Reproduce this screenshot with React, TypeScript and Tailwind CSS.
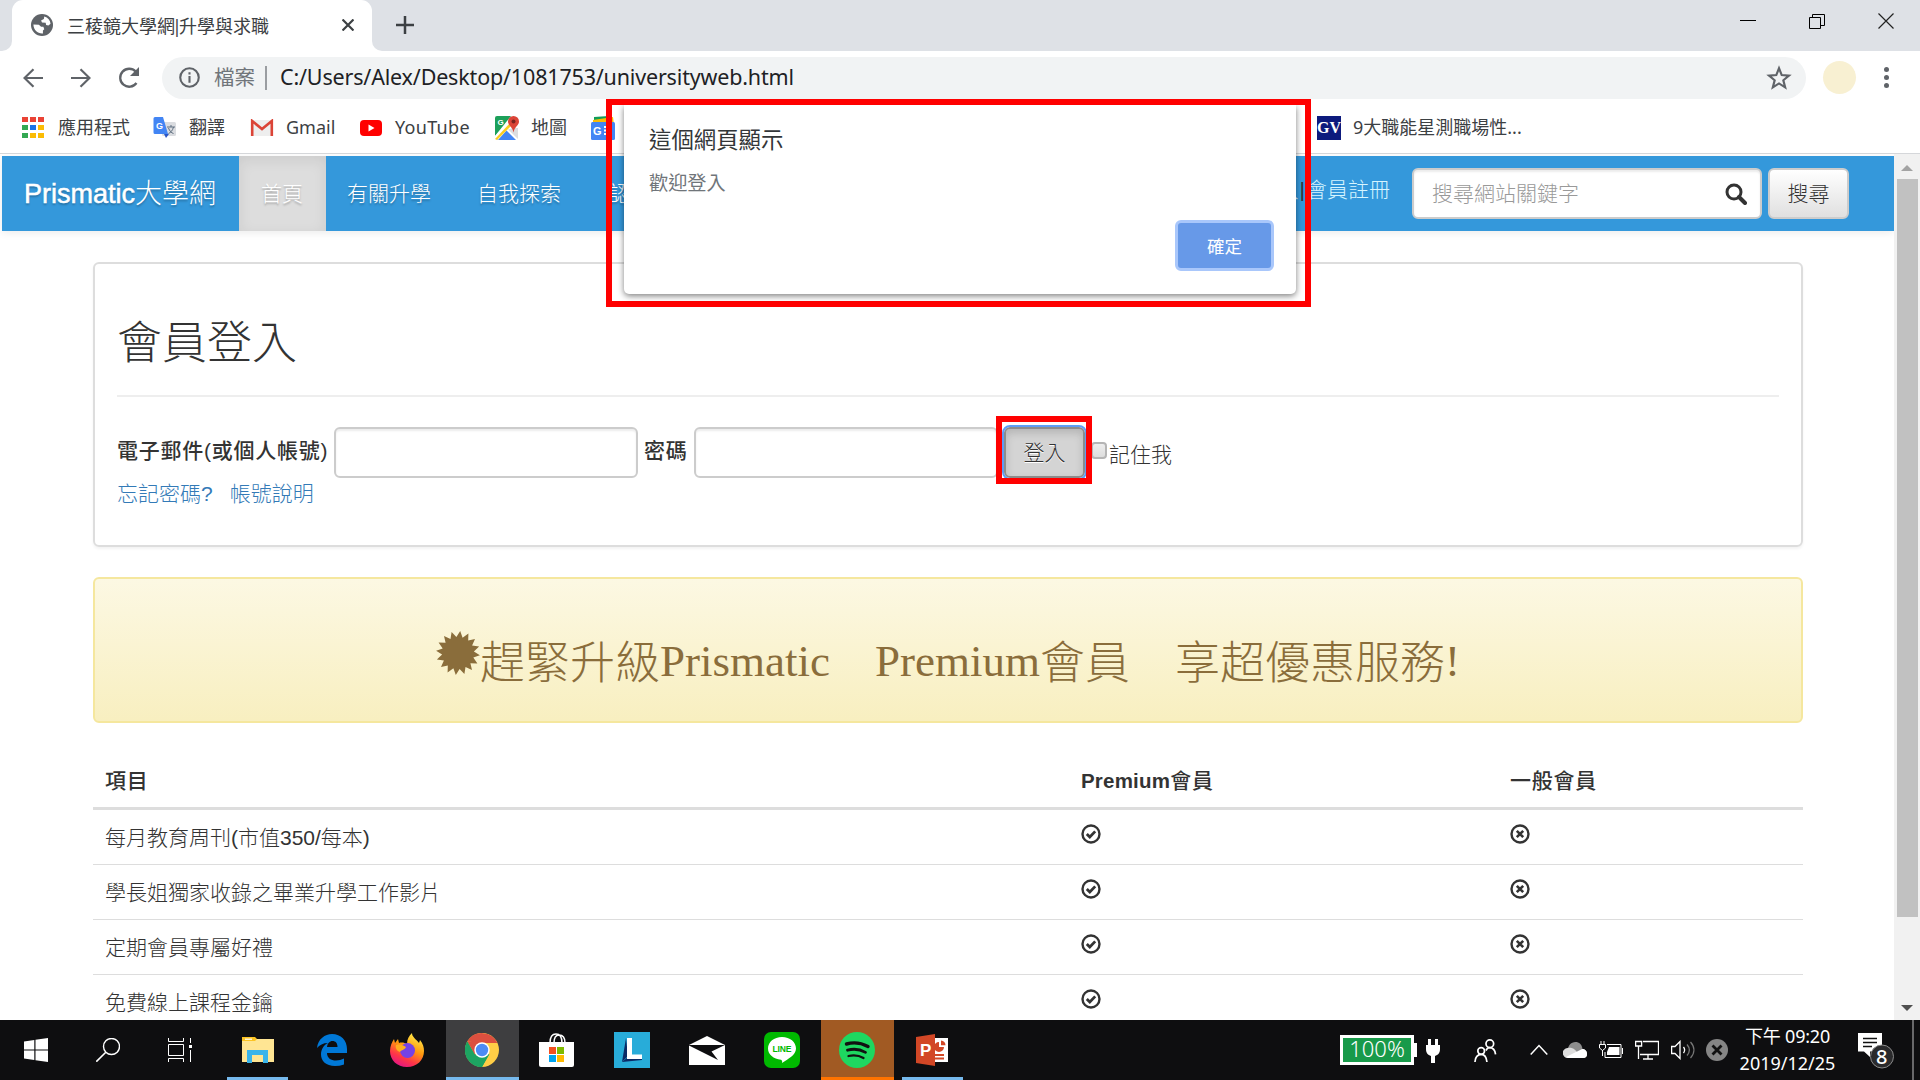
import React from "react";

const UI = "font-['Noto_Sans','Noto_Sans_CJK_TC',sans-serif]";
const ARIAL = "font-['Liberation_Sans','Noto_Sans_CJK_TC',sans-serif] font-light";
const TIMES = "font-['Liberation_Serif','Noto_Sans_CJK_TC',serif] font-light";

const Bookmark = ({ icon, label, cls }: { icon: React.ReactNode; label: string; cls: string }) => (
  <div className={`flex shrink-0 items-center gap-3 ${cls}`}>
    <span className="flex w-6 shrink-0 justify-center">{icon}</span>
    <span className="whitespace-nowrap">{label}</span>
  </div>
);

const AppsIcon = () => {
  const colors = ["#ea4335", "#ea4335", "#ea4335", "#34a853", "#1a73e8", "#fbbc04", "#34a853", "#fbbc04", "#fbbc04"];
  return (
    <span className="grid grid-cols-3 gap-x-[2px] gap-y-[3px]">
      {colors.map((c, i) => (
        <span key={i} className="h-[5px] w-[6px]" style={{ background: c }} />
      ))}
    </span>
  );
};

const TranslateIcon = () => (
  <svg viewBox="0 0 24 24" className="size-6">
    <rect x="9" y="6" width="14" height="14" rx="1.5" fill="#dadce0" />
    <path d="M14 11h8M18 9v2M20.500 11c-1 4-3 5.500-5 6.500M15.500 12c1 3 3 5 5 5.500" stroke="#5f6f80" fill="none" />
    <path d="M11 18h5l-3 4z" fill="#2a56c6" />
    <path d="M2 1h8l5 17H2a1.500 1.500 0 0 1-1.500-1.500v-14A1.500 1.500 0 0 1 2 1z" fill="#4285f4" />
    <text x="3" y="12.500" fontSize="9" fontWeight="700" fill="#fff" fontFamily="Liberation Sans">G</text>
  </svg>
);

const GmailIcon = () => (
  <svg viewBox="0 0 24 18" className="h-[18px] w-6">
    <path d="M2 1h20v16H2z" fill="#eee" />
    <path d="M2.200 17V2l9.800 8 9.800-8v15" fill="none" stroke="#db4437" strokeWidth="2.600" />
  </svg>
);

const YoutubeIcon = () => (
  <svg viewBox="0 0 24 18" className="h-[18px] w-6">
    <rect x="1" y="1" width="22" height="16" rx="4" fill="#f00" />
    <path d="M9.500 5.500v7l6-3.500z" fill="#fff" />
  </svg>
);

const MapsIcon = () => (
  <svg viewBox="0 0 24 24" className="size-6">
    <rect width="24" height="24" rx="2" fill="#fff" />
    <path d="M2 0h14L0 20V2a2 2 0 0 1 2-2z" fill="#1da05a" />
    <path d="M2 24l9-10 10 10z" fill="#4285f4" />
    <path d="M0 20L16 3l2 4L3 24z" fill="#fff" />
    <path d="M0 23L15 7l2 2L2 24z" fill="#fbcd20" />
    <path d="M13 13.500l10 9.500V12l-5 0z" fill="#dcdde0" />
    <path d="M18.500 0a5.500 5.500 0 0 1 5.500 5.500c0 4-4.500 5-5.500 11-1-6-5.500-7-5.500-11A5.500 5.500 0 0 1 18.500 0z" fill="#db4437" />
    <circle cx="18.500" cy="5.500" r="2" fill="#7b231e" />
    <text x="2.500" y="8.500" fontSize="8" fontWeight="700" fill="#fff" fontFamily="Liberation Sans">G</text>
  </svg>
);

const NewsIcon = () => (
  <svg viewBox="0 0 24 24" className="size-6">
    <path d="M3 1l15-1v6H3z" fill="#0f9d58" />
    <path d="M2 4l20-3 1 8H2z" fill="#fbbc04" />
    <rect y="6" width="24" height="18" rx="1.500" fill="#4285f4" />
    <text x="2" y="18.500" fontSize="11" fontWeight="700" fill="#fff" fontFamily="Liberation Sans">G</text>
    <path d="M13 11h8M13 14.500h8M13 18h8" stroke="#fff" strokeWidth="2" />
  </svg>
);

const TabStrip = () => (
  <div className="flex h-[51px] items-start bg-[#dee1e6]">
    <div className="flex h-full w-3 items-end bg-white">
      <div className="h-full w-full rounded-br-[10px] bg-[#dee1e6]" />
    </div>
    <div className="flex h-full w-[360px] items-center rounded-t-[11px] bg-white pl-[19px] pr-[18px]">
      <svg viewBox="0 0 24 24" className="-mt-px size-[22px]">
        <circle cx="12" cy="12" r="12" fill="#5f6368" />
        <path d="M14.500 2.800C18.500 4 21 7 21.300 10.500L19 12.500l-2.500-.5-.5-2.500-4-.3L11 7l3-1.500z" fill="#fff" />
        <path d="M2.600 11.500l6 .3 2.400 2 2.500.2 1 2.500-1.500 1.500v3.200C7 21.500 3 18 2.600 11.500z" fill="#fff" />
      </svg>
      <span className="ml-[14px] mt-px w-[230px] whitespace-nowrap text-[18px] text-[#3c4043]">三稜鏡大學網<span className="-mx-[3px]">|</span>升學與求職</span>
      <svg viewBox="0 0 12 12" className="-mt-px ml-auto size-3">
        <path d="M.5.5l11 11M11.500.5l-11 11" stroke="#3c4043" strokeWidth="2.200" />
      </svg>
    </div>
    <div className="h-full w-3 bg-white">
      <div className="h-full w-full rounded-bl-[10px] bg-[#dee1e6]" />
    </div>
    <svg viewBox="0 0 18 18" className="ml-3 mt-4 size-[18px]">
      <path d="M9 0v18M0 9h18" stroke="#3c4043" strokeWidth="2.500" />
    </svg>
    <div className="ml-auto mr-[26px] mt-[13px] flex gap-[53px]">
      <svg viewBox="0 0 16 16" className="size-4"><path d="M0 7.500h16" stroke="#000" /></svg>
      <svg viewBox="0 0 16 16" className="size-4">
        <path d="M.5 4.500h11v11H.5zM3.500 4V1.500h12v11H12" fill="none" stroke="#000" />
      </svg>
      <svg viewBox="0 0 16 16" className="size-4"><path d="M.5.5l15 15M15.500.5l-15 15" stroke="#222" strokeWidth="1.200" /></svg>
    </div>
  </div>
);

const Toolbar = () => (
  <div className="flex h-[51px] items-center pl-[23px] pt-[2px]">
    <svg viewBox="0 0 20 20" className="size-5"><path d="M20 10H2M10.500 1.200L1.500 10l9 8.800" fill="none" stroke="#5f6368" strokeWidth="2.200" /></svg>
    <svg viewBox="0 0 20 20" className="ml-7 size-5"><path d="M0 10h18M9.500 1.200l9 8.800-9 8.800" fill="none" stroke="#5f6368" strokeWidth="2.200" /></svg>
    <svg viewBox="0 0 22 22" className="ml-[27px] size-[22px]">
      <path d="M18.500 16a9 9 0 1 1-.8-11.500" fill="none" stroke="#5f6368" strokeWidth="2.300" />
      <path d="M21 0v9h-9z" fill="#5f6368" />
    </svg>
    <div className="ml-[22px] flex h-[42px] w-[1644px] items-center rounded-full bg-[#f1f3f4] pl-[17px] pr-[14px]">
      <svg viewBox="0 0 22 22" className="size-[21px]">
        <circle cx="11" cy="11" r="9.700" fill="none" stroke="#5f6368" strokeWidth="2.200" />
        <path d="M11 9.500v7M11 5.500v2.300" stroke="#5f6368" strokeWidth="2.200" />
      </svg>
      <span className="ml-[14px] text-[20.500px] text-[#70757a]">檔案</span>
      <span className="ml-[10px] h-6 w-[2px] bg-[#9a9da1]" />
      <span className="ml-[13px] whitespace-nowrap text-[21.500px] tracking-[-0.170px] text-[#202124]">C:/Users/Alex/Desktop/1081753/universityweb.html</span>
      <svg viewBox="0 0 24 24" className="ml-auto size-[26px]">
        <path d="M12 3l2.500 6.300 6.700.5-5.200 4.300 1.700 6.600L12 17l-5.700 3.700L8 14.100 2.800 9.800l6.700-.5z" fill="none" stroke="#5f6368" strokeWidth="2" />
      </svg>
    </div>
    <span className="ml-[17px] size-[33px] rounded-full bg-[#f8f0d2]" />
    <span className="ml-[28px] flex flex-col gap-[3px]">
      <i className="size-[5px] rounded-full bg-[#5f6368]" />
      <i className="size-[5px] rounded-full bg-[#5f6368]" />
      <i className="size-[5px] rounded-full bg-[#5f6368]" />
    </span>
  </div>
);

const Bookmarks = () => (
  <div className="flex h-[51px] items-center pl-[21px] text-[18px] text-[#3c4043]">
    <Bookmark cls="w-[132px] [&>span:last-child]:ml-px" icon={<AppsIcon />} label="應用程式" />
    <Bookmark cls="w-[97px]" icon={<TranslateIcon />} label="翻譯" />
    <Bookmark cls="w-[109px]" icon={<GmailIcon />} label="Gmail" />
    <Bookmark cls="w-[136px] [&>span:last-child]:tracking-[0.300px]" icon={<YoutubeIcon />} label="YouTube" />
    <Bookmark cls="w-[96px]" icon={<MapsIcon />} label="地圖" />
    <NewsIcon />
    <span className="ml-[702px] flex size-6 items-center justify-center bg-[#0d1a7d] font-['Liberation_Serif',serif] text-[16px] font-bold text-white">GV</span>
    <span className="ml-3 whitespace-nowrap">9大職能星測職場性...</span>
  </div>
);

const SearchGlyph = () => (
  <svg viewBox="0 0 22 22" className="size-[22px]">
    <circle cx="9" cy="9" r="7" fill="none" stroke="#333" strokeWidth="3" />
    <path d="M14 14l6 6" stroke="#333" strokeWidth="4" strokeLinecap="round" />
  </svg>
);

const NavBar = () => (
  <nav className={`ml-[2px] flex h-[75px] w-[1892px] bg-[#3498db] text-[21px] text-white shadow-[0_2px_8px_rgba(0,0,0,0.08)] ${ARIAL} [&_span]:[text-shadow:0_2px_2px_rgba(0,0,0,0.25)]`}>
    <span className="flex w-[237px] items-center whitespace-nowrap pl-[22px] text-[27px]"><span className="font-normal [-webkit-text-stroke:0.500px_white]">Prismatic</span>大學網</span>
    <span className="flex w-[87px] items-center justify-center bg-[#dddddd] pr-px shadow-[inset_0_4px_14px_rgba(0,0,0,0.08)]">首頁</span>
    <span className="flex w-[130px] items-center pl-[21px]">有關升學</span>
    <span className="flex w-[132px] items-center pl-[21px]">自我探索</span>
    <span className="flex items-center whitespace-nowrap pl-[21px]">認</span>
    <div className="ml-auto flex pr-[45px]">
      <div className="mt-[19px] text-[#d6f5ff]">登入<i className="mx-[1px] not-italic text-[#333]">|</i>會員註冊</div>
      <div className="ml-[22px] mt-3 flex h-[51px] w-[350px] items-center justify-between rounded-[6px] border-2 border-[#ccc] bg-white pl-[18px] pr-[13px] shadow-[inset_0_2px_2px_rgba(0,0,0,0.08)]">
        <p className="text-[#999]">搜尋網站關鍵字</p>
        <SearchGlyph />
      </div>
      <div className="ml-[6px] mt-3 flex h-[51px] w-[81px] items-center justify-center rounded-[6px] border-2 border-[#ccc] bg-gradient-to-b from-white to-[#e0e0e0] text-[#333]">搜尋</div>
    </div>
  </nav>
);

const Field = () => <div className="h-[51px] w-[304px] rounded-[6px] border-2 border-[#ccc] bg-white shadow-[inset_0_2px_2px_rgba(0,0,0,0.075)]" />;

const LoginPanel = () => (
  <section className="mt-[31px] h-[285px] rounded-[6px] border-2 border-[#ddd] px-[22px] shadow-[0_2px_3px_rgba(0,0,0,0.05)]">
    <h2 className={`mt-[50px] h-[60px] text-[45px] leading-[60px] ${TIMES}`}>會員登入</h2>
    <hr className="mt-[21px] border-t-2 border-[#eee]" />
    <div className="mt-[30px] flex items-center">
      <b className="mb-[3px] w-[217px] whitespace-nowrap font-medium tracking-[0.750px]">電子郵件(或個人帳號)</b>
      <Field />
      <b className="mb-[3px] ml-[6px] w-[50px] font-medium tracking-[0.750px]">密碼</b>
      <Field />
      <div className="relative ml-[6px] flex h-[51px] w-[81px] items-center justify-center rounded-[6px] border-2 border-[#8c8c8c] bg-[#d4d4d4] shadow-[inset_0_4px_8px_rgba(0,0,0,0.15)] outline-2 outline-[#5e9df5] [text-shadow:0_1px_0_#fff]">
        登入
        <div className="absolute -left-[10px] -top-[13px] h-[68px] w-[96px] border-6 border-[#f00]" />
      </div>
      <div className="mb-[5px] ml-[6px] h-[17px] w-4 rounded-[4px] border-2 border-[#b5b5b5] bg-gradient-to-b from-[#eee] to-[#ddd]" />
      <span className="ml-[2px] mt-1">記住我</span>
    </div>
    <div className="flex h-8 items-center gap-[17px] text-[#337ab7]">
      <span>忘記密碼?</span>
      <span>帳號說明</span>
    </div>
  </section>
);

const Burst = () => {
  const pts = Array.from({ length: 32 }, (_, i) => {
    const a = ((i + 0.5) * Math.PI) / 16;
    const r = i % 2 ? 16 : 22;
    return `${(22 + r * Math.sin(a)).toFixed(1)},${(22 - r * Math.cos(a)).toFixed(1)}`;
  }).join(" ");
  return <svg viewBox="0 0 44 44" className="-mt-4 size-11"><polygon points={pts} fill="#8a6d3b" /></svg>;
};

const Banner = () => (
  <section className={`mt-[30px] flex h-[146px] items-center justify-center rounded-[6px] border-2 border-[#f5e79e] bg-gradient-to-b from-[#fcf8e3] to-[#f8efc0] pt-[22px] text-[45px] leading-[30px] text-[#8a6d3b] ${TIMES}`}>
    <Burst />
    <span className="flex items-center whitespace-pre">
      <span className="pt-[5px]">趕緊升級</span>
      <span className="font-normal">Prismatic　Premium</span>
      <span className="pt-[5px]">會員　享超優惠服務</span>
      <span>!</span>
    </span>
  </section>
);

const Mark = ({ ok }: { ok: boolean }) => (
  <svg viewBox="0 0 20 20" className="ml-[-0.500px] mt-[-6px] size-5">
    <circle cx="10" cy="10" r="8.500" fill="none" stroke="#333" strokeWidth="2.400" />
    {ok ? <path d="M5.800 10l3 3 5.400-5.600" fill="none" stroke="#333" strokeWidth="2.800" /> : <path d="M6.800 6.800l6.400 6.400M13.200 6.800l-6.400 6.400" stroke="#333" strokeWidth="2.600" />}
  </svg>
);

const rows = ["每月教育周刊(市值350/每本)", "學長姐獨家收錄之畢業升學工作影片", "定期會員專屬好禮", "免費線上課程金鑰"];

const Plans = () => (
  <section className="mt-[30px]">
    <div className="grid h-[57px] grid-cols-[976px_429px_1fr] items-center border-b-[3px] border-[#ddd] pl-3 pt-[2px] font-medium tracking-[0.750px]">
      <span>項目</span>
      <span><b className="text-[20.500px] tracking-[0.200px]">Premium</b>會員</span>
      <span>一般會員</span>
    </div>
    {rows.map((r) => (
      <div key={r} className="grid h-[55px] grid-cols-[976px_429px_1fr] items-center border-b border-[#ddd] pl-3">
        <span className="pt-px">{r}</span>
        <Mark ok />
        <Mark ok={false} />
      </div>
    ))}
  </section>
);

const Dialog = () => (
  <div className="absolute left-[606px] top-[99px] h-[208px] w-[705px] border-6 border-[#f00]">
    <div className="ml-3 h-[189px] w-[672px] rounded-b-[5px] bg-white px-[25px] shadow-[0_2px_6px_rgba(0,0,0,0.5)] [clip-path:inset(0_-12px_-12px_-12px)]">
      <div className="pt-[19px] text-[22.400px] leading-8 text-[#333639]">這個網頁顯示</div>
      <div className="mt-[11px] text-[19.200px] leading-8 text-[#70757a]">歡迎登入</div>
      <div className="-mr-[3px] ml-auto mt-[21px] flex h-[51px] w-[99px] items-center justify-center rounded-[6px] border-[3px] border-[#a9c7fb] bg-[#6799e8] pt-px text-[17.500px] text-white">確定</div>
    </div>
  </div>
);

const Tile = ({ cls, children }: { cls: string; children: React.ReactNode }) => (
  <div className={`flex h-[60px] shrink-0 items-center justify-center ${cls}`}>{children}</div>
);

const Taskbar = () => (
  <footer className="flex h-[60px] items-center bg-[#0e0e10] text-white">
    <Tile cls="w-[72px]"><svg viewBox="0 0 24 24" className="size-6"><path d="M0 3.500L10.300 2v9.500H0zM11.500 1.800L24 0v11.500H11.500zM0 12.500h10.300V22L0 20.500zM11.500 12.500H24V24l-12.500-1.800z" fill="#fff" /></svg></Tile>
    <Tile cls="w-[72px]"><svg viewBox="0 0 24 24" className="size-6"><circle cx="15.500" cy="8.500" r="8" fill="none" stroke="#fff" strokeWidth="1.400" /><path d="M9.800 14.200L.3 23.700" stroke="#fff" strokeWidth="1.600" /></svg></Tile>
    <Tile cls="w-[72px]"><svg viewBox="0 0 24 24" className="size-6" fill="none" stroke="#fff"><path d="M.5 0v3.500h15V0M.5 6.500h15v11H.5zM.5 24v-3.500h15V24M22.500 0v5M22.500 12v12" /><path d="M21 7h3v3h-3z" fill="#fff" stroke="none" /></svg></Tile>
    <Tile cls="ml-[11px] w-[61px] border-b-[3px] border-[#76b9ed]"><svg viewBox="0 0 32 27" className="mt-[3px] h-[27px] w-8"><path d="M0 0h13l2 2v5H0z" fill="#fcc424" /><path d="M0 4h13l2-2h17v23H0z" fill="#ffe593" /><path d="M3 2.200h7" stroke="#fff" strokeWidth="1.200" /><path d="M5 26V13h21v13h-5v-8H10v8z" fill="#3ab4ea" /></svg></Tile>
    <Tile cls="w-[88px]"><svg viewBox="0 0 30 32" className="h-8 w-[30px]"><path d="M0 14C1 5 8 0 15 0c9 0 15 6.500 15 15v4H10c0 5 4 7.500 9 7.500 3 0 5.500-.8 8-2v6c-3 1-6 1.500-9 1.500C9 32 4 27 4 20.500 4 15 7 11 11 9 6 9 2.500 11 0 14zm10-1h10.500c0-4-2-6-5-6s-5 2.500-5.500 6z" fill="#0078d7" /></svg></Tile>
    <Tile cls="w-[70px] pr-2"><svg viewBox="0 0 34 34" className="size-[34px]"><defs><linearGradient id="fx" x1=".8" y1="0" x2=".3" y2="1"><stop offset="0" stopColor="#fff44f" /><stop offset=".45" stopColor="#ff980e" /><stop offset=".75" stopColor="#ff3647" /><stop offset="1" stopColor="#e31587" /></linearGradient></defs><path d="M17 34C7 34 0 27 0 18c0-5 2-9 4-12l1 4 3-4 1 4c3-1 6 0 8 1 0-5 2-8 5-11 0 4 4 6 7 10l1-3c3 4 4 7 4 11 0 9-7 16-17 16z" fill="url(#fx)" /><circle cx="17.500" cy="17.500" r="7.500" fill="#7542e5" /><path d="M6 12c4-1 7 0 10 2-1 3-5 3-6 5-3-1-5-4-4-7z" fill="#ffad1f" /></svg></Tile>
    <Tile cls="w-[73px] border-b-[3px] border-[#76b9ed] bg-[#3e3e40] pr-[2px]"><svg viewBox="0 0 34 34" className="mt-[3px] size-[34px]"><circle cx="17" cy="17" r="17" fill="#ffcd46" /><path d="M17 10L2.300 8.500A17 17 0 0 1 32.400 10z" fill="#db4f3f" /><path d="M2.300 8.500A17 17 0 0 0 17 34l7.400-12.800H9.600z" fill="#1da462" /><path d="M2.300 8.500l7.300 12.700L17 9z" fill="#db4f3f" /><path d="M2.300 8.500A17 17 0 0 0 17 34l6.500-12H10z" fill="#1da462" /><circle cx="17" cy="17" r="7.700" fill="#fff" /><circle cx="17" cy="17" r="6.200" fill="#4c8bf5" /></svg></Tile>
    <Tile cls="w-[75px]"><svg viewBox="0 0 35 34" className="h-[34px] w-[35px]"><path d="M11 10C11 3 14 1 17 1s6 2 6 9M15 10c0-6 2-8 5-8s6 2 6 8" fill="none" stroke="#fff" strokeWidth="1.500" /><path d="M0 9h35v23a2 2 0 0 1-2 2H2a2 2 0 0 1-2-2z" fill="#fff" /><path d="M10 14h7v7h-7z" fill="#f25022" /><path d="M18 14h7v7h-7z" fill="#7fba00" /><path d="M10 22h7v7h-7z" fill="#00a4ef" /><path d="M18 22h7v7h-7z" fill="#ffb900" /></svg></Tile>
    <Tile cls="w-[75px]"><svg viewBox="0 0 36 36" className="size-9"><path d="M0 0h36v36H0z" fill="#28acd9" /><path d="M12 6l2 18-6 6z" fill="#0a2a66" /><path d="M8 30l6-5h14v3z" fill="#0a2a66" /><path d="M13 6h5v16.500h10V27H13z" fill="#fff" /></svg></Tile>
    <Tile cls="w-[75px]"><svg viewBox="0 0 36 29" className="h-[29px] w-9"><path d="M0 9L18 0l18 9v20H0z" fill="#fff" /><path d="M0 9h36L22.500 15.500 29 24 0 9.500z" fill="#0e0e10" /></svg></Tile>
    <Tile cls="w-[75px]"><svg viewBox="0 0 36 36" className="size-9"><rect width="36" height="36" rx="7" fill="#00b900" /><path d="M18 5c8 0 14 5 14 11.500S24 27 18 31c.5-1.500 0-3-1-3.300C9.500 27 4 22.500 4 16.500 4 10 10 5 18 5z" fill="#fff" /><text x="8.500" y="19.800" fontSize="8.500" fontWeight="700" textLength="19" fontFamily="Liberation Sans" fill="#00b900">LINE</text></svg></Tile>
    <Tile cls="ml-[2px] w-[73px] border-b-[3px] border-[#ff7300] bg-[#a15a23] pr-[2px]"><svg viewBox="0 0 36 36" className="mt-[3px] size-9"><circle cx="18" cy="18" r="18" fill="#1ed760" /><g fill="none" stroke="#111" strokeLinecap="round"><path d="M7.500 12c7-2 15-1 21.500 2.500" strokeWidth="3.400" /><path d="M8.500 18.200c6-1.700 12.500-1 18 2.200" strokeWidth="2.800" /><path d="M9.500 24c5-1.200 10.500-.6 15 2" strokeWidth="2.300" /></g></svg></Tile>
    <Tile cls="ml-2 w-[61px] border-b-[3px] border-[#76b9ed] pr-[2px]"><svg viewBox="0 0 32 32" className="mt-[3px] size-8"><path d="M18 4h14v24H18z" fill="#fff" /><path d="M23 8a5 5 0 1 0 5 5h-5zM25 6.500v4.800h4.500A5 5 0 0 0 25 6.500zM19 20h9v2h-9zM19 23.500h9v2h-9z" fill="#d24726" /><path d="M0 3l19-3v32L0 29z" fill="#d24726" /><text x="4" y="22" fontSize="17" fontWeight="700" fontFamily="Liberation Sans" fill="#fff">P</text></svg></Tile>

    <div className="ml-[377px] flex h-[30px] w-[74px] items-center justify-center border-[3px] border-white bg-[#189a4a] pb-1 text-[22px] font-light leading-none">100%</div>
    <span className="h-[14px] w-[3px] bg-white" />
    <svg viewBox="0 0 14 24" className="ml-[9px] mt-[2px] h-6 w-[14px]"><path d="M2 0h3v6h4V0h3v6h2v4c0 4-2 6-5 7v7H5v-7c-3-1-5-3-5-7V6h2z" fill="#fff" /></svg>
    <svg viewBox="0 0 24 24" className="ml-[34px] size-[23px]" fill="none" stroke="#fff" strokeWidth="1.800"><circle cx="16.500" cy="5" r="4" /><circle cx="7.500" cy="12.500" r="3.500" /><path d="M1 24c0-5 3-8 6.500-8s5.500 3 6 8M12.500 12c1-2 2-3 3.500-3 4 0 6 3 6.500 7" /></svg>
    <svg viewBox="0 0 18 12" className="ml-[33px] h-3 w-[18px]"><path d="M.7 10.500L9 1.500l8.300 9" fill="none" stroke="#fff" strokeWidth="1.500" /></svg>
    <svg viewBox="0 0 24 16" className="ml-[15px] h-4 w-6"><path d="M5 10c-1-6 3-10 7.500-10 3.500 0 6.500 2.500 7 7l-8 4z" fill="#8d8d8d" /><path d="M5 16a5 5 0 0 1-.5-10C10 5 12 8 14 10l6-3c3 1 4 2.500 4 5a4 4 0 0 1-4 4z" fill="#ddd" /><path d="M3 15l16-8c3 0 5 2 5 5a4 4 0 0 1-4 4H5z" fill="#fff" /></svg>
    <svg viewBox="0 0 24 18" className="ml-3 h-[18px] w-6"><path d="M10 6h10.500v8H8v-3z" fill="#fff" /><path d="M8 3.500h14v13H6V11M23.500 7v6M2 0v3M5 0v3M.5 3.500h6V7L3.500 9.500.5 7zM3.500 9v6" fill="none" stroke="#fff" /></svg>
    <svg viewBox="0 0 24 20" className="ml-3 h-5 w-6" fill="none" stroke="#fff" strokeWidth="1.300"><path d="M8 1.500h15.500v13H5M13 15v4M8 19h10M.6 1.500h6V6h-6zM3.500 6v13" /></svg>
    <svg viewBox="0 0 24 20" className="ml-3 h-5 w-6" fill="none" stroke="#fff" strokeWidth="1.300"><path d="M.6 6.500H4L9 1.500v17L4 13.500H.6z" /><path d="M12.500 7c1.500 2 1.500 4 0 6" /><path d="M16 4.500c3 3.500 3 7.500 0 11M19.500 2c4.500 5 4.500 11 0 16" stroke="#777" /></svg>
    <svg viewBox="0 0 22 22" className="ml-[11px] size-[22px]"><circle cx="11" cy="11" r="11" fill="#858585" /><path d="M6.500 6.500l9 9M15.500 6.500l-9 9" stroke="#111" strokeWidth="2.800" /></svg>
    <div className="ml-[7px] w-[105px] shrink-0 whitespace-nowrap text-center text-[18px] leading-[27px]">
      <div className="tracking-[-0.200px]">下午 09:20</div>
      <div>2019/12/25</div>
    </div>
    <div className="relative ml-[18px] mt-[2px] h-9 w-9">
      <svg viewBox="0 0 36 36" className="size-9"><path d="M0 0h24v18.500H12V24l-6-5.500H0z" fill="#fff" /><path d="M5 5.500h14M5 9.500h14M5 13.500h9" stroke="#111" strokeWidth="1.400" /><circle cx="24" cy="23.500" r="11.500" fill="#2a2a2c" stroke="#8a8a8a" /></svg>
      <span className="absolute left-[18px] top-[12px] text-[20px] font-medium leading-6">8</span>
    </div>
    <span className="ml-[18px] h-full w-[2px] bg-[#68686a]" />
  </footer>
);

export default function App() {
  return (
    <div className={`relative flex h-[1080px] w-[1920px] flex-col overflow-hidden bg-white ${UI}`}>
      <TabStrip />
      <Toolbar />
      <Bookmarks />
      <div className="flex h-[867px] border-t border-[#d5d7da]">
        <main className={`h-full w-[1894px] overflow-hidden pt-[2px] text-[21px] leading-[30px] text-[#333] ${ARIAL}`}>
          <NavBar />
          <div className="ml-[93px] w-[1710px]">
            <LoginPanel />
            <Banner />
            <Plans />
          </div>
        </main>
        <aside className="flex w-[26px] flex-col items-center bg-[#f1f1f1]">
          <svg viewBox="0 0 12 6" className="mt-[11px] h-[6px] w-3 shrink-0"><path d="M0 6l6-6 6 6z" fill="#a3a3a3" /></svg>
          <div className="mt-[8px] h-[738px] w-[21px] bg-[#c1c1c1]" />
          <svg viewBox="0 0 12 6" className="mb-[9px] mt-auto h-[6px] w-3 shrink-0"><path d="M0 0l6 6 6-6z" fill="#505050" /></svg>
        </aside>
      </div>
      <Taskbar />
      <Dialog />
    </div>
  );
}
